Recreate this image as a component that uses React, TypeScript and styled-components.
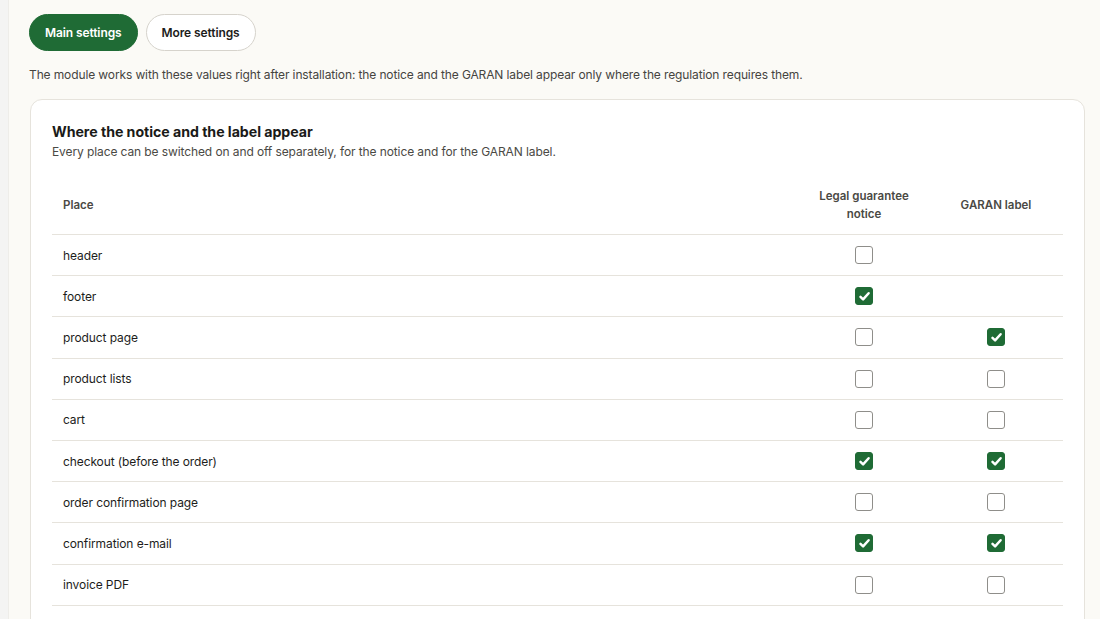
import React from "react";
import styled, { createGlobalStyle } from "styled-components";

const Global = createGlobalStyle`
  html, body { margin: 0; padding: 0; }
  body {
    background: #fbfaf6;
    font-family: Inter, "Noto Sans", sans-serif;
    color: #1d1d1b;
    -webkit-font-smoothing: antialiased;
  }
`;

const Shell = styled.div`
  display: flex;
  min-height: 619px;
`;

const SideStrip = styled.div`
  width: 8px;
  flex: none;
  background: #f4f4f3;
  border-right: 1px solid #eeede9;
`;

const Main = styled.main`
  flex: 1;
  padding: 14px 15px 0 20px;
  display: flex;
  flex-direction: column;
`;

const Tabs = styled.div`
  display: flex;
  gap: 8px;
`;

const Tab = styled.button<{ $active?: boolean }>`
  font-family: inherit;
  font-size: 12px;
  font-weight: 600;
  letter-spacing: -0.1px;
  height: 37px;
  padding: 0 15px;
  border-radius: 19px;
  cursor: pointer;
  border: 1px solid ${(p) => (p.$active ? "#1f6b35" : "#d6d3cc")};
  background: ${(p) => (p.$active ? "#1f6b35" : "#ffffff")};
  color: ${(p) => (p.$active ? "#ffffff" : "#1d1d1b")};
`;

const Intro = styled.p`
  margin: 16px 0 16px;
  font-size: 12px;
  letter-spacing: -0.12px;
  line-height: 16px;
  color: #45443f;
`;

const Card = styled.section`
  margin-left: 1px;
  background: #ffffff;
  border: 1px solid #e6e3dc;
  border-radius: 12px;
  padding: 22px 21px 40px 21px;
`;

const Title = styled.h2`
  margin: 0;
  font-size: 14.2px;
  font-weight: 700;
  letter-spacing: -0.05px;
  line-height: 20px;
  color: #1a1a18;
`;

const Sub = styled.p`
  margin: 2px 0 0;
  font-size: 12px;
  letter-spacing: -0.1px;
  line-height: 16px;
  color: #4a4944;
`;

const Table = styled.table`
  width: 100%;
  border-collapse: collapse;
  margin-top: 16px;
`;

const Th = styled.th<{ $w?: number; $center?: boolean }>`
  font-size: 11.5px;
  font-weight: 600;
  color: #4a4944;
  text-align: ${(p) => (p.$center ? "center" : "left")};
  width: ${(p) => (p.$w ? `${p.$w}px` : "auto")};
  padding: 11px 11px;
  line-height: 18px;
  border-bottom: 1px solid #e6e3dc;
`;

const HeadText = styled.span`
  display: inline-block;
  max-width: 104px;
`;

const Td = styled.td<{ $center?: boolean }>`
  font-size: 12px;
  letter-spacing: -0.1px;
  color: #1d1d1b;
  height: 40.2px;
  padding: 0 11px;
  text-align: ${(p) => (p.$center ? "center" : "left")};
  border-bottom: 1px solid #e6e3dc;
  vertical-align: middle;
`;

const Box = styled.span<{ $checked?: boolean }>`
  display: inline-flex;
  align-items: center;
  justify-content: center;
  width: 18px;
  height: 18px;
  box-sizing: border-box;
  border-radius: 3px;
  vertical-align: middle;
  border: 1px solid ${(p) => (p.$checked ? "#1f6b35" : "#8f8e8a")};
  background: ${(p) => (p.$checked ? "#1f6b35" : "#ffffff")};
`;

const Check = ({ on }: { on: boolean }) => (
  <Box $checked={on}>
    {on && (
      <svg width="13" height="13" viewBox="0 0 12 12">
        <path
          d="M2.3 6.4 L4.7 8.7 L9.8 3"
          fill="none"
          stroke="#fff"
          strokeWidth="2.3"
          strokeLinecap="round"
          strokeLinejoin="round"
        />
      </svg>
    )}
  </Box>
);

type Row = { place: string; notice: boolean; label: boolean | null };

const rows: Row[] = [
  { place: "header", notice: false, label: null },
  { place: "footer", notice: true, label: null },
  { place: "product page", notice: false, label: true },
  { place: "product lists", notice: false, label: false },
  { place: "cart", notice: false, label: false },
  { place: "checkout (before the order)", notice: true, label: true },
  { place: "order confirmation page", notice: false, label: false },
  { place: "confirmation e-mail", notice: true, label: true },
  { place: "invoice PDF", notice: false, label: false },
];

export default function App() {
  return (
    <Shell>
      <Global />
      <SideStrip />
      <Main>
        <Tabs>
          <Tab $active>Main settings</Tab>
          <Tab>More settings</Tab>
        </Tabs>
        <Intro>
          The module works with these values right after installation: the notice and the GARAN
          label appear only where the regulation requires them.
        </Intro>
        <Card>
          <Title>Where the notice and the label appear</Title>
          <Sub>Every place can be switched on and off separately, for the notice and for the GARAN label.</Sub>
          <Table>
            <thead>
              <tr>
                <Th>Place</Th>
                <Th $w={108} $center>
                  <HeadText>Legal guarantee notice</HeadText>
                </Th>
                <Th $w={112} $center>
                  GARAN label
                </Th>
              </tr>
            </thead>
            <tbody>
              {rows.map((r) => (
                <tr key={r.place}>
                  <Td>{r.place}</Td>
                  <Td $center>
                    <Check on={r.notice} />
                  </Td>
                  <Td $center>{r.label !== null && <Check on={r.label} />}</Td>
                </tr>
              ))}
            </tbody>
          </Table>
        </Card>
      </Main>
    </Shell>
  );
}
